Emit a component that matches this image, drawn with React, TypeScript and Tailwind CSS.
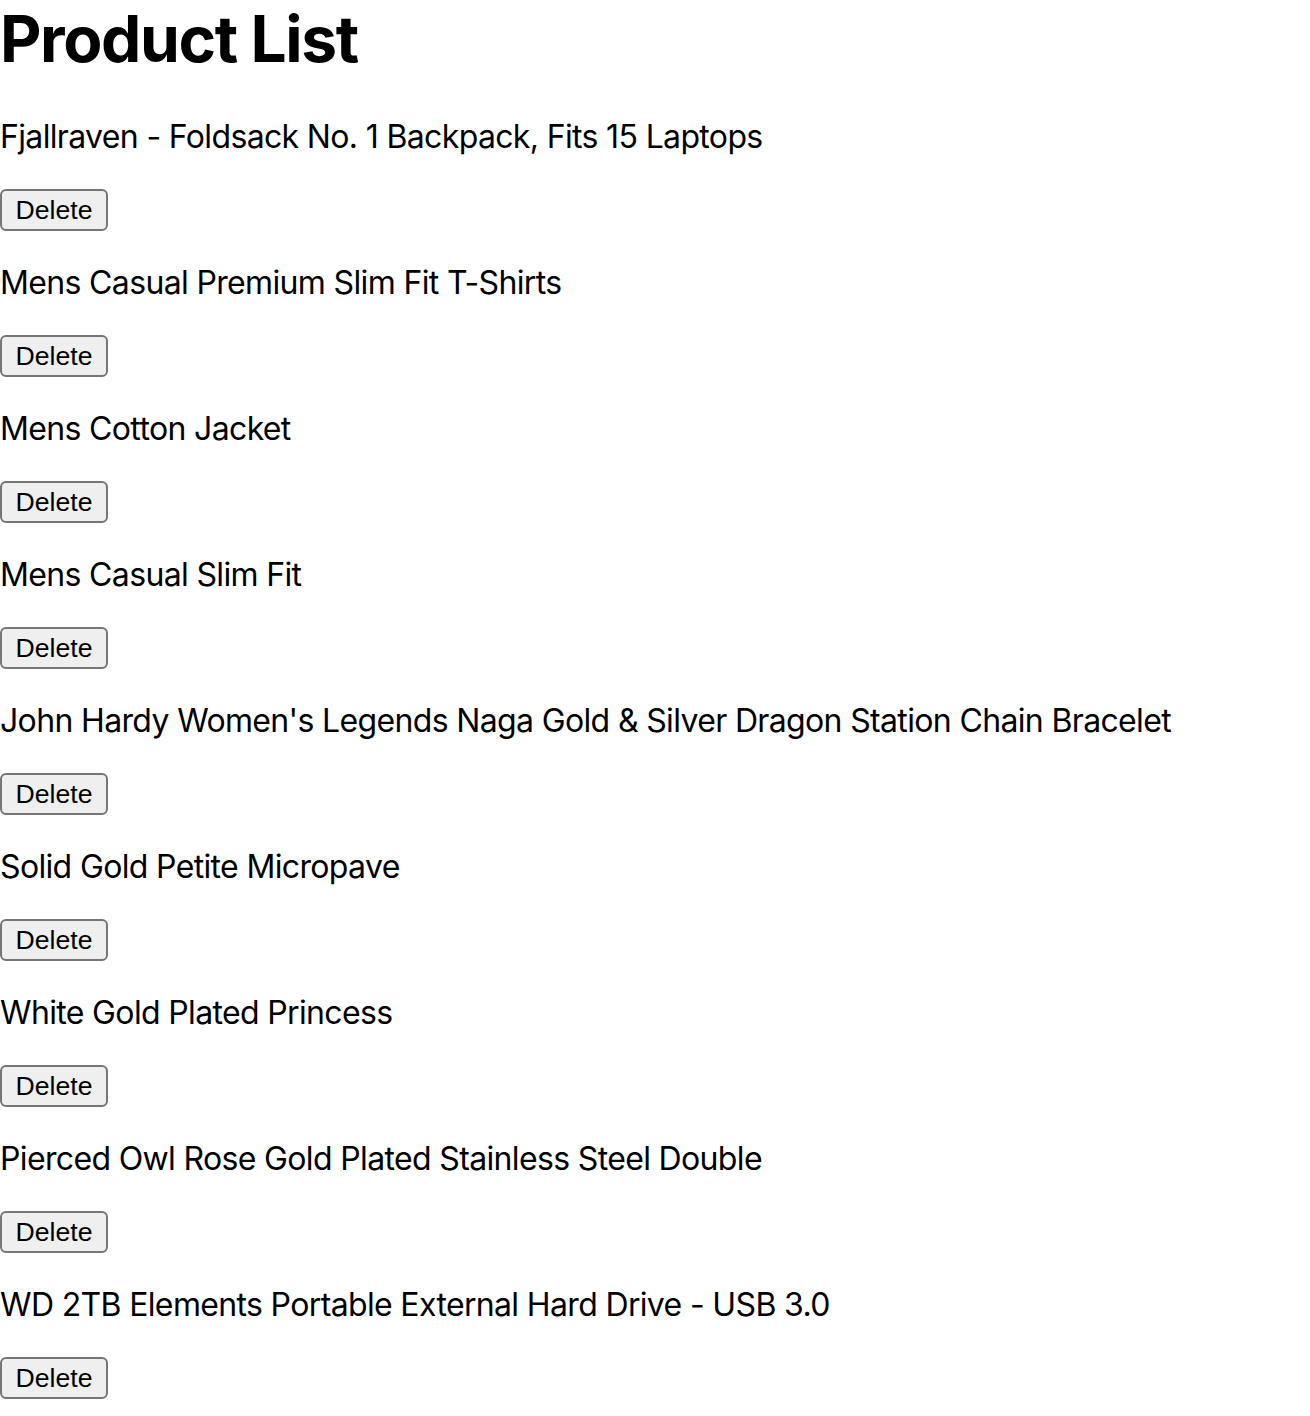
import React from "react";

const items = [
  "Fjallraven - Foldsack No. 1 Backpack, Fits 15 Laptops",
  "Mens Casual Premium Slim Fit T-Shirts",
  "Mens Cotton Jacket",
  "Mens Casual Slim Fit",
  "John Hardy Women's Legends Naga Gold & Silver Dragon Station Chain Bracelet",
  "Solid Gold Petite Micropave",
  "White Gold Plated Princess",
  "Pierced Owl Rose Gold Plated Stainless Steel Double",
  "WD 2TB Elements Portable External Hard Drive - USB 3.0",
];

export default function App() {
  return (
    <div className="bg-white text-black min-h-[1416px] font-['Inter',sans-serif]">
      <h1 className="m-0 mb-[41px] text-[64px] leading-[77px] font-bold tracking-[-1.4px]">Product List</h1>
      {items.map((t) => (
        <div key={t}>
          <p className="my-[33px] text-[32px] leading-[38px] tracking-[-0.65px]">{t}</p>
          <button className="h-[42px] w-[108px] bg-[#efefef] border-2 border-[#767676] rounded-[6px] text-[26.67px] leading-[30px] font-['Liberation_Sans',Arial,sans-serif] text-black flex items-center justify-center">
            Delete
          </button>
        </div>
      ))}
    </div>
  );
}
